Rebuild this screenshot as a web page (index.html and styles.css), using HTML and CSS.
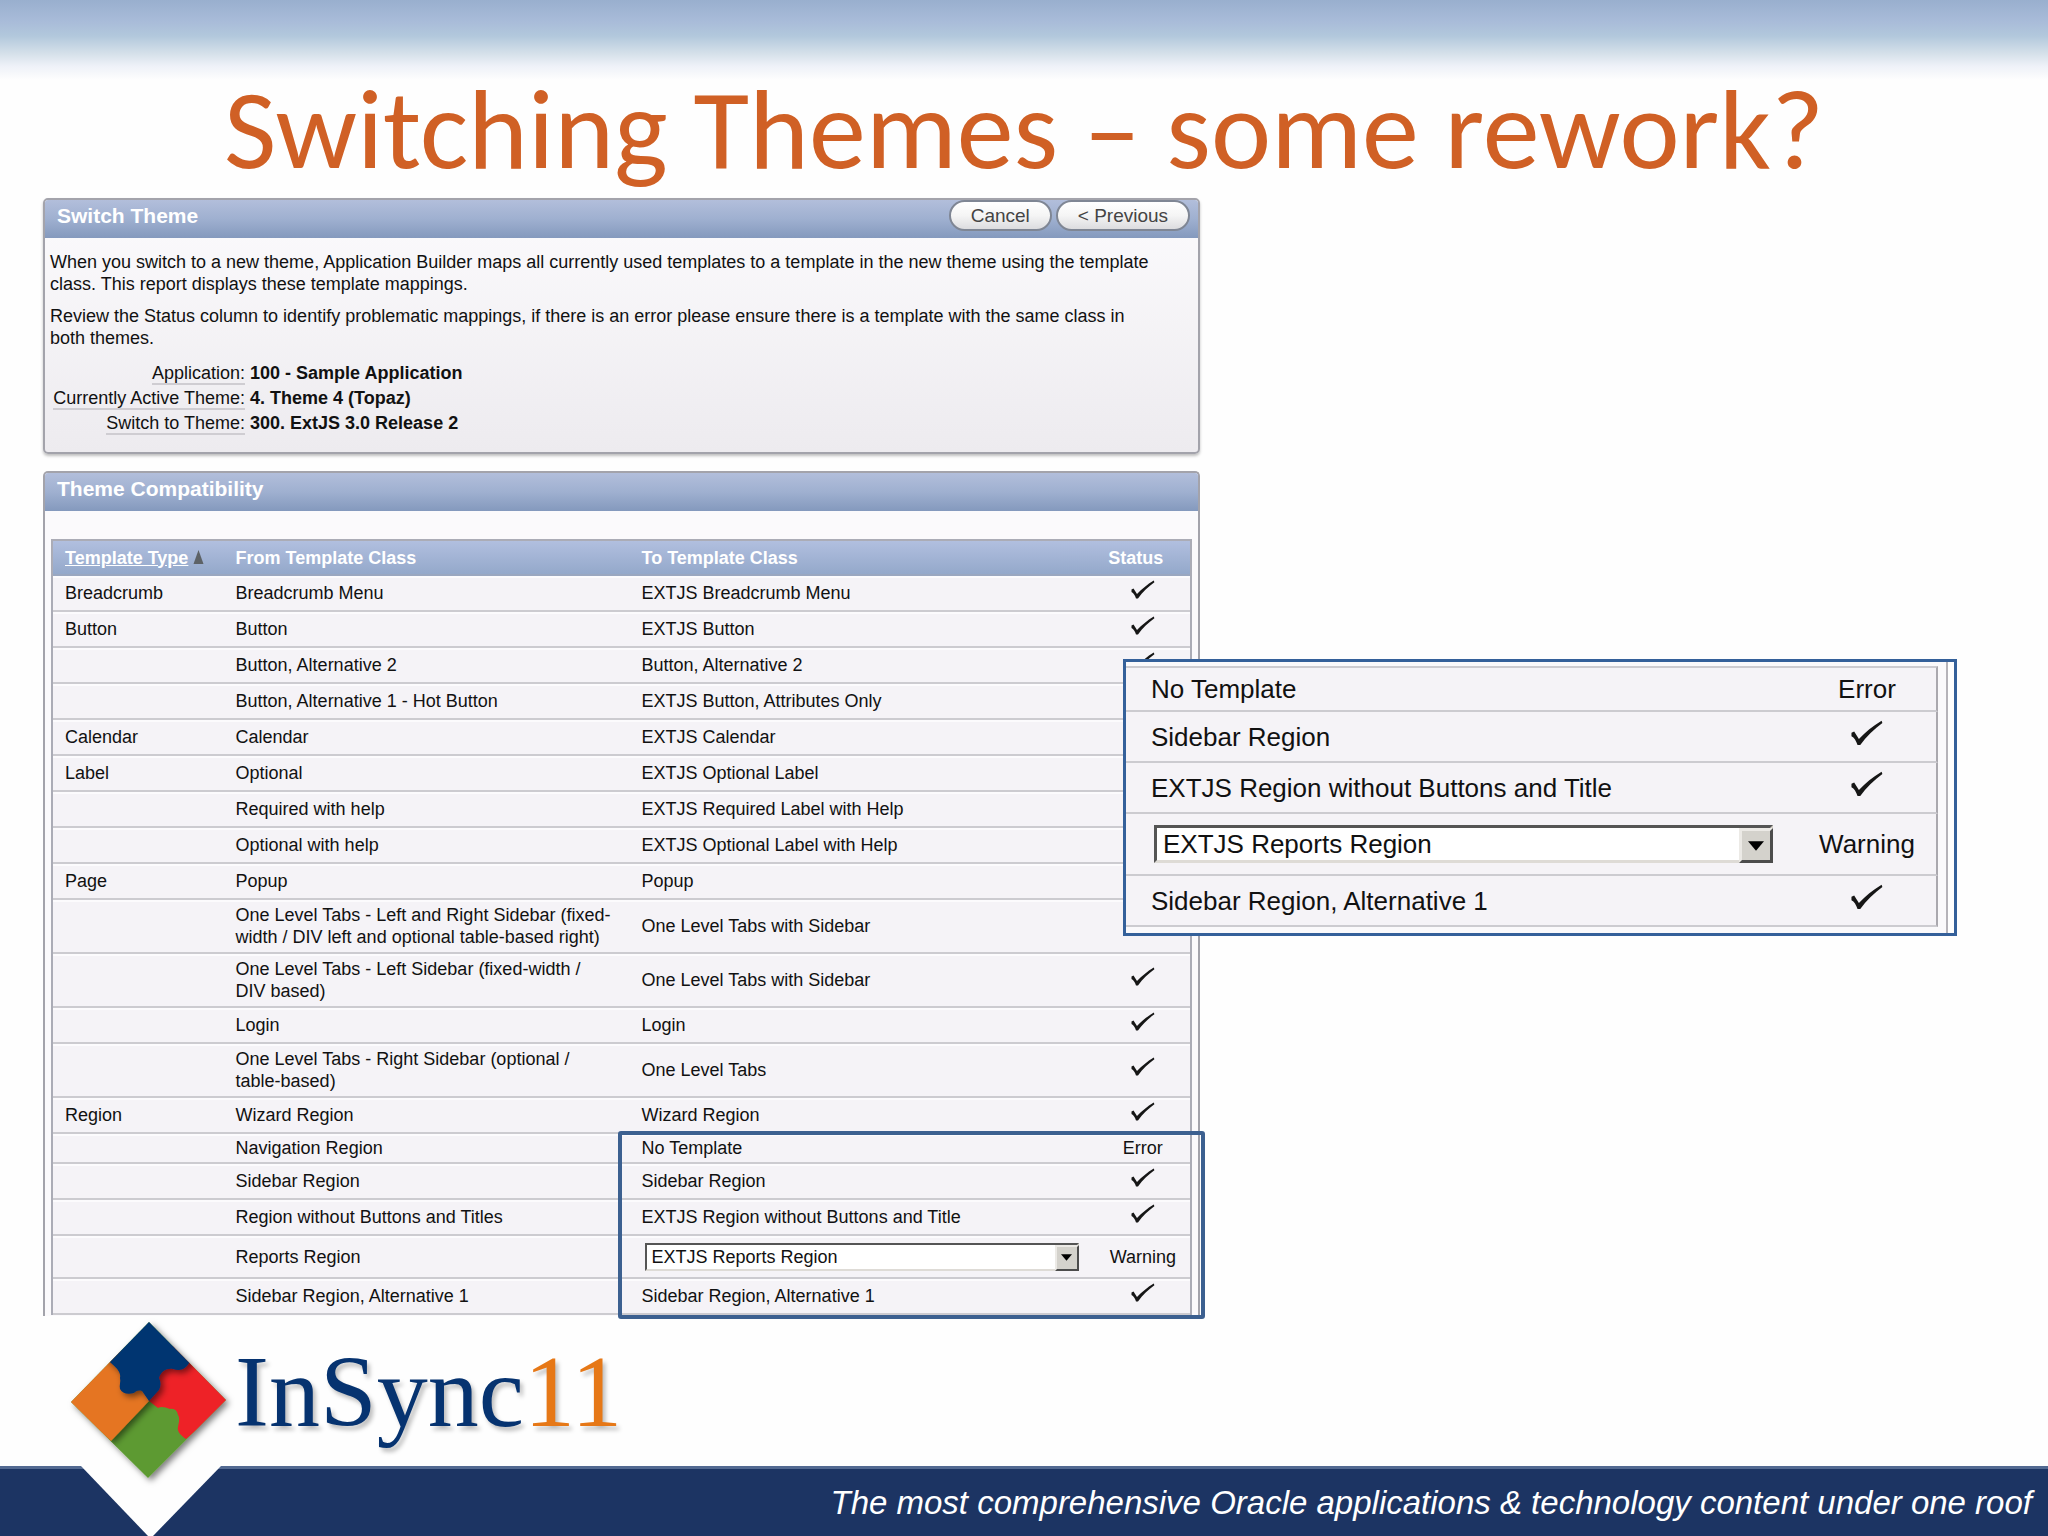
FILE: index.html
```html
<!DOCTYPE html>
<html lang="en">
<head>
    <meta charset="UTF-8">
    <meta name="viewport" content="width=device-width, initial-scale=1.0">
    <title>Switching Themes</title>
    <link rel="stylesheet" href="styles.css">
</head>
<body>
    <svg class="symbols" aria-hidden="true">
        <symbol id="check" viewBox="0 0 24 20">
            <path d="M0.500 9.500 L2.500 8.500 L6 14 C11 9 16 4.500 22.800 0.500 L23.400 2.200 C17.500 6.500 11.500 12 7 18.500 L5 18.500 C4 15.500 2.500 13 0.500 12 Z"/>
        </symbol>
    </svg>

    <header class="slide-header">
        <h1>Switching Themes – some rework?</h1>
    </header>

    <main class="slide-body">
        <section class="panel">
            <div class="panel-header">
                <h2>Switch Theme</h2>
                <div class="panel-actions">
                    <button type="button" class="btn">Cancel</button>
                    <button type="button" class="btn">&lt; Previous</button>
                </div>
            </div>
            <div class="panel-content">
                <p>When you switch to a new theme, Application Builder maps all currently used templates to a template in the new theme using the template class. This report displays these template mappings.</p>
                <p>Review the Status column to identify problematic mappings, if there is an error please ensure there is a template with the same class in both themes.</p>
                <dl class="details">
                    <dt><span>Application:</span></dt>
                    <dd>100 - Sample Application</dd>
                    <dt><span>Currently Active Theme:</span></dt>
                    <dd>4. Theme 4 (Topaz)</dd>
                    <dt><span>Switch to Theme:</span></dt>
                    <dd>300. ExtJS 3.0 Release 2</dd>
                </dl>
            </div>
        </section>

        <section class="panel panel-report">
            <div class="panel-header">
                <h2>Theme Compatibility</h2>
            </div>
            <div class="report-wrap">
                <table class="report">
                    <thead>
                        <tr>
                            <th class="col-type"><a href="#">Template Type</a> <svg class="sort" viewBox="0 0 10 14" aria-hidden="true"><path d="M5 0 L10 14 L0 14 Z"/></svg></th>
                            <th class="col-from">From Template Class</th>
                            <th class="col-to">To Template Class</th>
                            <th class="col-status">Status</th>
                        </tr>
                    </thead>
                    <tbody>
                        <tr><td>Breadcrumb</td><td>Breadcrumb Menu</td><td>EXTJS Breadcrumb Menu</td><td class="status"><svg class="check"><use href="#check"/></svg></td></tr>
                        <tr><td>Button</td><td>Button</td><td>EXTJS Button</td><td class="status"><svg class="check"><use href="#check"/></svg></td></tr>
                        <tr><td></td><td>Button, Alternative 2</td><td>Button, Alternative 2</td><td class="status"><svg class="check"><use href="#check"/></svg></td></tr>
                        <tr><td></td><td>Button, Alternative 1 - Hot Button</td><td>EXTJS Button, Attributes Only</td><td></td></tr>
                        <tr><td>Calendar</td><td>Calendar</td><td>EXTJS Calendar</td><td></td></tr>
                        <tr><td>Label</td><td>Optional</td><td>EXTJS Optional Label</td><td></td></tr>
                        <tr><td></td><td>Required with help</td><td>EXTJS Required Label with Help</td><td></td></tr>
                        <tr><td></td><td>Optional with help</td><td>EXTJS Optional Label with Help</td><td></td></tr>
                        <tr><td>Page</td><td>Popup</td><td>Popup</td><td></td></tr>
                        <tr class="tall"><td></td><td>One Level Tabs - Left and Right Sidebar (fixed-<br>width / DIV left and optional table-based right)</td><td>One Level Tabs with Sidebar</td><td></td></tr>
                        <tr class="tall"><td></td><td>One Level Tabs - Left Sidebar (fixed-width /<br>DIV based)</td><td>One Level Tabs with Sidebar</td><td class="status"><svg class="check"><use href="#check"/></svg></td></tr>
                        <tr><td></td><td>Login</td><td>Login</td><td class="status"><svg class="check"><use href="#check"/></svg></td></tr>
                        <tr class="tall"><td></td><td>One Level Tabs - Right Sidebar (optional /<br>table-based)</td><td>One Level Tabs</td><td class="status"><svg class="check"><use href="#check"/></svg></td></tr>
                        <tr><td>Region</td><td>Wizard Region</td><td>Wizard Region</td><td class="status"><svg class="check"><use href="#check"/></svg></td></tr>
                        <tr class="short"><td></td><td>Navigation Region</td><td>No Template</td><td class="status">Error</td></tr>
                        <tr><td></td><td>Sidebar Region</td><td>Sidebar Region</td><td class="status"><svg class="check"><use href="#check"/></svg></td></tr>
                        <tr><td></td><td>Region without Buttons and Titles</td><td>EXTJS Region without Buttons and Title</td><td class="status"><svg class="check"><use href="#check"/></svg></td></tr>
                        <tr class="select-row">
                            <td></td>
                            <td>Reports Region</td>
                            <td>
                                <div class="picker">
                                    <select aria-label="Template for Reports Region"><option>EXTJS Reports Region</option></select>
                                    <span class="arrow"><svg viewBox="0 0 10 6"><path d="M0 0 H10 L5 6 Z"/></svg></span>
                                </div>
                            </td>
                            <td class="status">Warning</td>
                        </tr>
                        <tr><td></td><td>Sidebar Region, Alternative 1</td><td>Sidebar Region, Alternative 1</td><td class="status"><svg class="check"><use href="#check"/></svg></td></tr>
                    </tbody>
                </table>
            </div>
            <div class="highlight"></div>
        </section>

        <!-- enlarged view of the highlighted rows -->
        <aside class="callout">
            <table class="report-zoom">
                <tbody>
                    <tr class="short"><td>No Template</td><td class="status">Error</td></tr>
                    <tr><td>Sidebar Region</td><td class="status"><svg class="check"><use href="#check"/></svg></td></tr>
                    <tr><td>EXTJS Region without Buttons and Title</td><td class="status"><svg class="check"><use href="#check"/></svg></td></tr>
                    <tr class="select-row">
                        <td>
                            <div class="picker picker-large">
                                <select aria-label="Template for Reports Region, enlarged"><option>EXTJS Reports Region</option></select>
                                <span class="arrow"><svg viewBox="0 0 10 6"><path d="M0 0 H10 L5 6 Z"/></svg></span>
                            </div>
                        </td>
                        <td class="status">Warning</td>
                    </tr>
                    <tr><td>Sidebar Region, Alternative 1</td><td class="status"><svg class="check"><use href="#check"/></svg></td></tr>
                </tbody>
            </table>
        </aside>
    </main>

    <footer class="slide-footer">
        <div class="brand">
            <svg class="brand-mark" viewBox="0 0 168 222" aria-hidden="true">
                <defs>
                    <filter id="shadow" x="-20%" y="-20%" width="150%" height="150%">
                        <feDropShadow dx="3" dy="3" stdDeviation="3" flood-color="#000" flood-opacity="0.5"/>
                    </filter>
                    <clipPath id="diamond"><path d="M82 8 L159 86 L81 164 L4 88 Z"/></clipPath>
                </defs>
                <path class="notch" d="M14 152 L81 222 H86 L154 152 Z"/>
                <path class="green" filter="url(#shadow)" d="M82 8 L159 86 L81 164 L4 88 Z"/>
                <g clip-path="url(#diamond)">
                    <path class="red" d="M82 87 L82 40 L140 20 L166 86 L119 125 C113 121 110 117 111 113 C112 108 113 104 111 101 C110 96 107 94 103 95 C98 93 94 92 91 94 Z"/>
                    <path class="orange" filter="url(#shadow)" d="M82 87 L44 127 L0 88 L44 30 L70 50 Z"/>
                    <path class="blue" filter="url(#shadow)" d="M82 0 L130 41 L122 49 C118 56 113 57 106 55 C100 54 94 57 92 64 C94 68 94 72 92 76 L82 87 L75 77 C71 76 69 77 67 79 C60 81 55 79 53 75 C52 71 54 68 53 64 C54 59 51 55 44 49 L36 42 Z"/>
                </g>
            </svg>
            <div class="wordmark">InSync<span>11</span></div>
        </div>
        <div class="tagline-bar">
            <p>The most comprehensive Oracle applications &amp; technology content under one roof</p>
        </div>
    </footer>
</body>
</html>
```
FILE: styles.css
```css
* {
    margin: 0;
    padding: 0;
    box-sizing: border-box;
}

body {
    display: flex;
    flex-direction: column;
    min-height: 100vh;
    background: linear-gradient(#99afce 0, #a9bcd9 22px, #b2c8dc 36px, #d6e1ea 54px, #eef1f8 66px, #fefefe 80px);
    color: #111;
    font-family: "Liberation Sans", Arial, sans-serif;
    font-size: 18px;
    line-height: 22px;
}

.symbols {
    position: absolute;
    width: 0;
    height: 0;
}

.slide-header {
    height: 198px;
    padding-top: 69px;
}

.slide-header h1 {
    color: #d06025;
    font-family: Carlito, Lato, sans-serif;
    font-size: 114px;
    font-weight: 400;
    line-height: 120px;
    text-align: center;
    white-space: nowrap;
}

.slide-body {
    position: relative;
    width: 56.5%;
    margin-left: 43px;
}

/* Panels */
.panel {
    border: 2px solid #a3a3ab;
    border-radius: 5px;
    background: linear-gradient(#fcfbfd, #edebef);
    box-shadow: 0 2px 3px rgba(0, 0, 0, 0.25);
}

.panel-header {
    display: flex;
    justify-content: space-between;
    align-items: flex-start;
    height: 38px;
    padding: 0 8px 0 12px;
    border-radius: 3px 3px 0 0;
    background: linear-gradient(#b2bedb, #9fb0d0 50%, #8499bd);
}

.panel-header h2 {
    color: #fff;
    font-size: 21px;
    line-height: 32px;
}

.panel-actions {
    display: flex;
    gap: 4px;
}

.btn {
    height: 31px;
    padding: 0 20px;
    border: 2px solid #7f8694;
    border-radius: 16px;
    background: linear-gradient(#fff, #f5f5f5 50%, #dcdcdf);
    color: #444;
    font-family: inherit;
    font-size: 19px;
}

.panel-content {
    padding: 13px 40px 16px 5px;
}

.panel-content p {
    margin-bottom: 10px;
}

.details {
    display: grid;
    grid-template-columns: 195px 1fr;
    column-gap: 5px;
    padding-top: 2px;
    line-height: 25px;
}

.details dt {
    text-align: right;
}

.details dt span {
    border-bottom: 2px solid #cfcdd2;
}

.details dd {
    font-weight: bold;
}

.panel-report {
    position: relative;
    margin-top: 17px;
    border-bottom: none;
    border-radius: 5px 5px 0 0;
    background: #fbfafc;
    box-shadow: none;
}

.report-wrap {
    padding: 28px 6px 1px;
}

/* Report table */
.report {
    width: 100%;
    border: 2px solid #abacb6;
    border-bottom: none;
    border-collapse: separate;
    border-spacing: 0;
    table-layout: fixed;
}

.report th {
    height: 35px;
    border-bottom: 2px solid #9aa7c0;
    color: #fff;
    text-align: left;
}

.report thead {
    background: linear-gradient(#b1bfdf, #92a7c9);
}

.report th,
.report td {
    padding: 0 0 0 12px;
}

.report th a {
    color: #fff;
}

.sort {
    width: 11px;
    height: 14px;
    fill: #5d6266;
}

.col-type {
    width: 15%;
}

.col-from {
    width: 35.7%;
}

.col-to {
    width: 38%;
}

.report td {
    height: 36px;
    border-bottom: 2px solid #cccbd0;
    background: #f5f3f7;
    box-shadow: inset 0 2px #fcfbfd;
    vertical-align: middle;
}

.report .tall td {
    height: 54px;
}

.report .short td {
    height: 30px;
}

.report .select-row td {
    height: 43px;
}

.report .col-status {
    padding: 0 0 0 20px;
    text-align: center;
}

.report .status {
    padding: 0 0 0 34px;
    text-align: center;
}

.check {
    display: block;
    width: 24px;
    height: 20px;
    margin: 0 auto 6px;
    fill: #161616;
}

/* Drop-down */
.picker {
    position: relative;
    width: 434px;
    margin-left: 3px;
}

.picker select {
    display: block;
    width: 100%;
    height: 28px;
    padding-left: 5px;
    border: 2px solid #555;
    border-right-color: #d4d0c8;
    border-bottom-color: #dedbd6;
    border-radius: 0;
    outline: none;
    appearance: none;
    background: #fff;
    color: #111;
    font: inherit;
}

.arrow {
    position: absolute;
    top: 2px;
    right: 0;
    bottom: 0;
    display: flex;
    align-items: center;
    justify-content: center;
    width: 24px;
    border: 2px solid #eceae6;
    border-right-color: #4c4c4c;
    border-bottom-color: #4c4c4c;
    background: #d4d2cc;
    pointer-events: none;
}

.arrow svg {
    width: 11px;
    height: 7px;
}

.highlight {
    position: absolute;
    right: -7px;
    bottom: -3px;
    width: 587px;
    height: 188px;
    border: 4px solid #3c6090;
    border-radius: 3px;
}

/* Enlarged rows laid over the report */
.callout {
    position: absolute;
    top: 461px;
    left: 1080px;
    width: 834px;
    padding-right: 6px;
    border: 3px solid #34609a;
    background: #fefefe;
    font-size: 26px;
    line-height: 32px;
}

.report-zoom {
    width: 100%;
    border-right: 2px solid #b5b3b9;
    border-spacing: 0;
    padding: 4px 8px 6px 0;
    background: #faf9fb;
}

.report-zoom tr:first-child td {
    border-top: 2px solid #cccbd0;
}

.report-zoom td {
    height: 51px;
    padding-left: 25px;
    border-bottom: 2px solid #cccbd0;
    background: #f5f3f7;
}

.report-zoom .short td {
    height: 46px;
}

.report-zoom .select-row td {
    height: 62px;
}

.report-zoom .status {
    width: 140px;
    padding: 0;
    border-right: 2px solid #aaa8ae;
    text-align: center;
}

.report-zoom .check {
    width: 34px;
    height: 27px;
}

.picker-large {
    width: 619px;
}

.picker-large select {
    height: 38px;
    padding-left: 6px;
    border-width: 3px;
}

.picker-large .arrow {
    top: 3px;
    width: 34px;
    border-width: 3px;
}

.picker-large .arrow svg {
    width: 16px;
    height: 10px;
}

/* Footer */
.slide-footer {
    position: relative;
    margin-top: auto;
}

.brand {
    position: absolute;
    bottom: 0;
    left: 67px;
    display: flex;
}

.brand-mark {
    width: 168px;
    height: 222px;
}

.brand-mark .notch {
    fill: #fefefe;
}

.brand-mark .blue {
    fill: #003471;
}

.brand-mark .red {
    fill: #ee2227;
}

.brand-mark .orange {
    fill: #e57420;
}

.brand-mark .green {
    fill: #5d9a31;
}

.wordmark {
    color: #063370;
    font-family: "Liberation Serif", "Times New Roman", serif;
    font-size: 102px;
    line-height: 156px;
    text-shadow: 3px 4px 4px rgba(0, 0, 0, 0.25);
}

.wordmark span {
    color: #e67817;
}

.tagline-bar {
    height: 70px;
    padding: 11px 16px 0;
    border-top: 3px solid #526991;
    background: #1c3463;
    color: #fff;
    font-size: 33px;
    font-style: italic;
    line-height: 46px;
    text-align: right;
}
```
